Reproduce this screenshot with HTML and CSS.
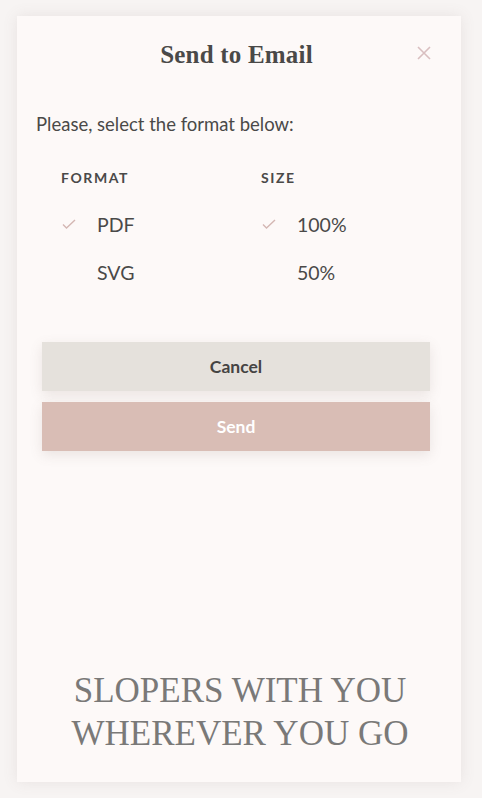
FILE: index.html
```html
<!DOCTYPE html>
<html>
<head>
<meta charset="utf-8">
<link rel="stylesheet" href="styles.css">
</head>
<body>
<div class="card">
  <header class="head">
    <h1 class="title">Send to Email</h1>
    <button class="close" aria-label="Close">
      <svg width="14" height="14" viewBox="0 0 14 14"><path d="M1 1L13 13M13 1L1 13" stroke="#d9bfc0" stroke-width="1.6" fill="none"/></svg>
    </button>
  </header>
  <p class="intro">Please, select the format below:</p>
  <div class="options">
    <div class="col">
      <div class="col-head">FORMAT</div>
      <div class="opt"><span class="check"><svg width="14" height="10" viewBox="0 0 14 10"><path d="M1 5.5L4.5 9L13 1" stroke="#d4b7b3" stroke-width="1.4" fill="none"/></svg></span>PDF</div>
      <div class="opt"><span class="check"></span>SVG</div>
    </div>
    <div class="col">
      <div class="col-head">SIZE</div>
      <div class="opt"><span class="check"><svg width="14" height="10" viewBox="0 0 14 10"><path d="M1 5.5L4.5 9L13 1" stroke="#d4b7b3" stroke-width="1.4" fill="none"/></svg></span>100%</div>
      <div class="opt"><span class="check"></span>50%</div>
    </div>
  </div>
  <div class="actions">
    <button class="btn cancel">Cancel</button>
    <button class="btn send">Send</button>
  </div>
  <div class="slogan">SLOPERS WITH YOU<br>WHEREVER YOU GO</div>
</div>
</body>
</html>
```

FILE: styles.css
```css
html, body {
  margin: 0;
  padding: 0;
}
body {
  background: #f7f4f3;
  width: 482px;
  height: 798px;
  padding: 16px 21px 16px 17px;
  box-sizing: border-box;
  font-family: Lato, "Noto Sans", sans-serif;
}
.card {
  background: #fdf9f8;
  height: 766px;
  box-shadow: 0 0 14px rgba(120, 100, 95, 0.12);
  display: flex;
  flex-direction: column;
  box-sizing: border-box;
  padding: 0 0 0 19px;
  position: relative;
}
.head {
  display: flex;
  align-items: center;
  justify-content: center;
  height: 74px;
  position: relative;
}
.title {
  margin: 4px 0 0 0;
  font-family: "Liberation Serif", serif;
  font-weight: bold;
  font-size: 25px;
  color: #4a4948;
  letter-spacing: 0.2px;
  transform: translateX(-12px);
}
.close {
  position: absolute;
  right: 30px;
  top: 30px;
  background: none;
  border: 0;
  padding: 0;
  width: 14px;
  height: 14px;
  display: block;
}
.close svg { display: block; }
.intro {
  margin: 22px 0 0 0;
  font-size: 18.5px;
  color: #4a4948;
  line-height: 24px;
}
.options {
  display: flex;
  padding-left: 25px;
  margin-top: 32px;
}
.col {
  width: 200px;
}
.col-head {
  font-size: 14px;
  font-weight: bold;
  letter-spacing: 1.6px;
  color: #4a4948;
  line-height: 20px;
  height: 20px;
}
.opt {
  display: flex;
  align-items: center;
  height: 48px;
  font-size: 19.5px;
  color: #4a4948;
}
.col-head + .opt { margin-top: 12px; }
.check {
  width: 36px;
  display: flex;
  align-items: center;
}
.check svg { display: block; margin-left: 1px; }
.actions {
  display: flex;
  flex-direction: column;
  gap: 11px;
  margin: 46px 31px 0 6px;
}
.btn {
  height: 49px;
  border: 0;
  font-family: Lato, sans-serif;
  font-weight: bold;
  font-size: 17.5px;
  box-shadow: 0 4px 12px rgba(120, 100, 95, 0.14);
  padding: 0;
}
.cancel {
  background: #e5e1dc;
  color: #454443;
}
.send {
  background: #d9bdb5;
  color: #ffffff;
}
.slogan {
  margin-top: auto;
  margin-bottom: 27px;
  text-align: center;
  font-family: "Liberation Serif", serif;
  font-size: 35px;
  line-height: 43px;
  color: #7a7978;
  padding-right: 19px;
  transform: translateX(1px);
}
```
